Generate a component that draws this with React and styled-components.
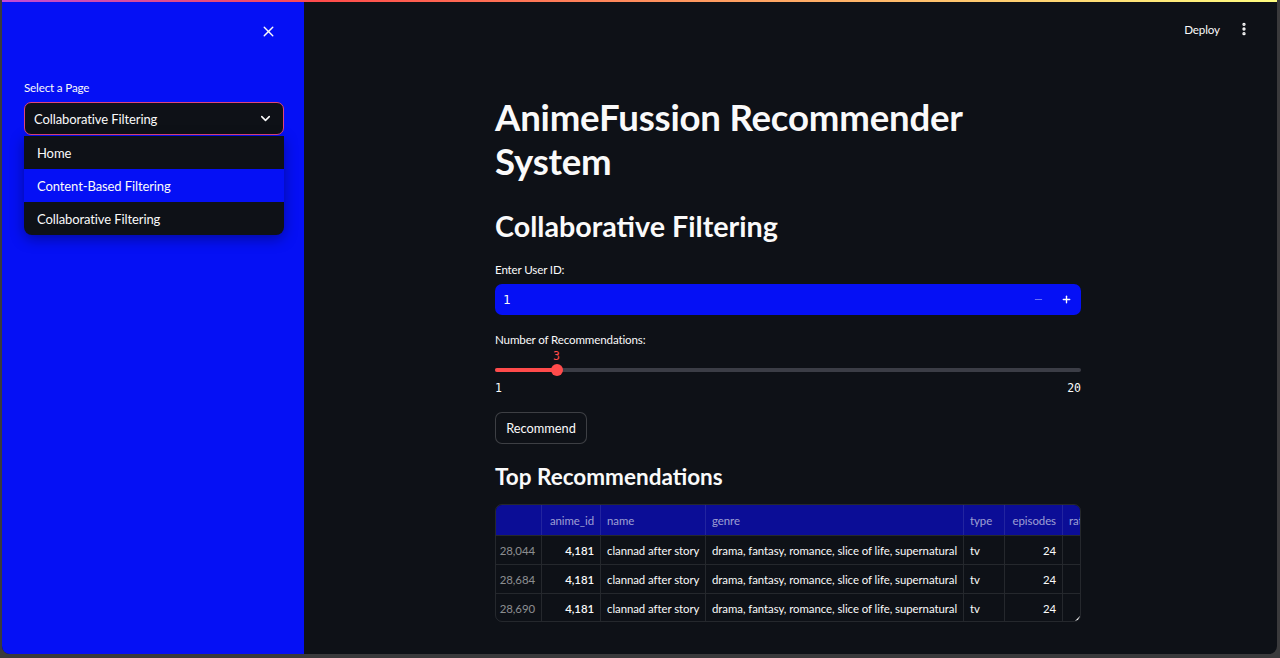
import React from 'react';
import styled, { createGlobalStyle } from 'styled-components';
import { X, ChevronDown, EllipsisVertical, Minus, Plus } from 'lucide-react';

const GlobalStyle = createGlobalStyle`
  html, body {
    margin: 0;
    padding: 0;
    background: #3a3a3c;
    font-family: Lato, "Noto Sans", sans-serif;
    color: #fafafa;
  }
`;

const Frame = styled.div`
  width: 1280px;
  height: 658px;
  padding: 0 3px 4px 2px;
  box-sizing: border-box;
  background: #3a3a3c;
`;

const Window = styled.div`
  position: relative;
  display: flex;
  height: 654px;
  border-radius: 0 0 8px 8px;
  overflow: hidden;
  background: #0e1117;
`;

const Decoration = styled.div`
  position: absolute;
  top: 0;
  left: 0;
  right: 0;
  height: 2px;
  background: linear-gradient(90deg, #c04bd8, #ff4b4b 25%, #ff9a60 55%, #fffd80);
  z-index: 5;
`;

const Sidebar = styled.aside`
  width: 302px;
  flex-shrink: 0;
  background: #0510f5;
  display: flex;
  flex-direction: column;
  padding: 0 20px 0 22px;
  box-sizing: border-box;
`;

const SidebarTop = styled.div`
  height: 62px;
  display: flex;
  justify-content: flex-end;
  align-items: center;
  padding-right: 7px;
  color: #fafafa;
`;

const IconButton = styled.button`
  background: none;
  border: none;
  padding: 0;
  color: #fafafa;
  display: flex;
  align-items: center;
  cursor: pointer;
`;

const Label = styled.div`
  font-size: 11.6px;
  letter-spacing: -0.15px;
  color: #fafafa;
  margin-top: ${p => p.$top || 0}px;
  margin-bottom: ${p => p.$bottom || 6}px;
  line-height: 16px;
`;

const SelectBox = styled.div`
  height: 33px;
  box-sizing: border-box;
  border: 1px solid #e0457a;
  border-radius: 7px;
  background: #0e1117;
  display: flex;
  align-items: center;
  justify-content: space-between;
  padding: 0 10px 0 9px;
  font-size: 13px;
  letter-spacing: -0.1px;
  color: #fafafa;
`;

const Menu = styled.ul`
  list-style: none;
  margin: 1px 0 0;
  padding: 0;
  background: #0e1117;
  border-radius: 0 0 8px 8px;
  overflow: hidden;
  box-shadow: 0 4px 14px rgba(0, 0, 0, 0.35);
`;

const MenuItem = styled.li`
  height: 33px;
  display: flex;
  align-items: center;
  padding-left: 13px;
  font-size: 13px;
  letter-spacing: -0.1px;
  color: #fafafa;
  background: ${p => (p.$active ? '#0510f5' : 'transparent')};
`;

const Main = styled.main`
  flex: 1;
  display: flex;
  flex-direction: column;
  position: relative;
`;

const Toolbar = styled.div`
  height: 58px;
  display: flex;
  justify-content: flex-end;
  align-items: center;
  gap: 16px;
  padding-right: 25px;
`;

const DeployLink = styled.span`
  font-size: 11.6px;
  letter-spacing: -0.1px;
  color: #fafafa;
`;

const Content = styled.div`
  width: 586px;
  margin-left: 191px;
  display: flex;
  flex-direction: column;
`;

const Title = styled.h1`
  margin: 37px 0 0;
  font-size: 36.6px;
  font-weight: 700;
  line-height: 44px;
  letter-spacing: -0.2px;
`;

const Subtitle = styled.h2`
  margin: 24px 0 0;
  font-size: 28.7px;
  font-weight: 700;
  line-height: 38px;
`;

const NumberInput = styled.div`
  height: 31px;
  border-radius: 7px;
  background: #0510f5;
  display: flex;
  align-items: center;
  padding: 0 8px;
  font-family: "DejaVu Sans Mono", monospace;
  font-size: 12.5px;
`;

const InputValue = styled.span`
  flex: 1;
`;

const Stepper = styled.div`
  display: flex;
  gap: 17px;
  align-items: center;
  padding-right: 1px;
`;

const SliderWrap = styled.div`
  display: flex;
  flex-direction: column;
`;

const ThumbValue = styled.div`
  height: 14px;
  font-family: "DejaVu Sans Mono", monospace;
  font-size: 11.5px;
  color: #ff4b4b;
  padding-left: 58px;
  line-height: 14px;
`;

const Track = styled.div`
  position: relative;
  height: 4px;
  margin-top: 5px;
  border-radius: 2px;
  background: #3b3d46;
`;

const TrackFill = styled.div`
  height: 100%;
  border-radius: 2px;
  background: #ff4b4b;
`;

const Thumb = styled.div`
  position: absolute;
  top: -4px;
  width: 12px;
  height: 12px;
  margin-left: -6px;
  border-radius: 50%;
  background: #ff4b4b;
`;

const Range = styled.div`
  display: flex;
  justify-content: space-between;
  margin-top: 9px;
  font-family: "DejaVu Sans Mono", monospace;
  font-size: 11.5px;
  line-height: 14px;
`;

const Button = styled.button`
  align-self: flex-start;
  margin-top: 17px;
  height: 32px;
  width: 92px;
  padding: 0;
  border-radius: 7px;
  border: 1px solid rgba(250, 250, 250, 0.2);
  background: #0e1117;
  color: #fafafa;
  font-family: inherit;
  font-size: 12.8px;
`;

const SectionTitle = styled.h3`
  margin: 19px 0 0;
  font-size: 22.5px;
  font-weight: 700;
  line-height: 28px;
`;

const TableWrap = styled.div`
  position: relative;
  margin-top: 13px;
  border: 1px solid rgba(250, 250, 250, 0.1);
  border-radius: 7px;
  overflow: hidden;
  height: 118px;
  box-sizing: border-box;
`;

const Grid = styled.div`
  display: grid;
  grid-template-columns: 46px 59px 105px 258px 41px 58px 60px;
  width: max-content;
  font-size: 11.4px;
  letter-spacing: -0.05px;
`;

const HeadCell = styled.div`
  height: 30px;
  background: #0b0d96;
  display: flex;
  align-items: center;
  justify-content: ${p => (p.$right ? 'flex-end' : 'flex-start')};
  padding: 0 6px;
  color: rgba(250, 250, 250, 0.62);
  border-right: 1px solid rgba(250, 250, 250, 0.1);
  white-space: nowrap;
  overflow: hidden;
`;

const Cell = styled.div`
  height: 29px;
  display: flex;
  align-items: center;
  justify-content: ${p => (p.$right ? 'flex-end' : 'flex-start')};
  padding: 0 6px;
  color: ${p => (p.$muted ? 'rgba(250, 250, 250, 0.55)' : '#fafafa')};
  font-weight: ${p => (p.$bold ? 600 : 400)};
  border-right: 1px solid rgba(250, 250, 250, 0.1);
  border-top: 1px solid rgba(250, 250, 250, 0.1);
  box-sizing: border-box;
  white-space: nowrap;
  overflow: hidden;
`;

const ResizeHandle = styled.div`
  position: absolute;
  right: 0;
  bottom: 0;
  width: 0;
  height: 0;
  border-left: 5px solid transparent;
  border-bottom: 5px solid #fafafa;
`;

const rows = [
  { idx: '28,044' },
  { idx: '28,684' },
  { idx: '28,690' },
];

export default function App() {
  return (
    <>
      <GlobalStyle />
      <Frame>
        <Window>
          <Decoration />
          <Sidebar>
            <SidebarTop>
              <IconButton>
                <X size={17} strokeWidth={2} />
              </IconButton>
            </SidebarTop>
            <Label $top={18} $bottom={6}>Select a Page</Label>
            <SelectBox>
              <span>Collaborative Filtering</span>
              <ChevronDown size={15} strokeWidth={2.5} />
            </SelectBox>
            <Menu>
              <MenuItem>Home</MenuItem>
              <MenuItem $active>Content-Based Filtering</MenuItem>
              <MenuItem>Collaborative Filtering</MenuItem>
            </Menu>
          </Sidebar>
          <Main>
            <Toolbar>
              <DeployLink>Deploy</DeployLink>
              <IconButton>
                <EllipsisVertical size={16} strokeWidth={3} />
              </IconButton>
            </Toolbar>
            <Content>
              <Title>
                AnimeFussion Recommender
                <br />
                System
              </Title>
              <Subtitle>Collaborative Filtering</Subtitle>
              <Label $top={17} $bottom={6}>Enter User ID:</Label>
              <NumberInput>
                <InputValue>1</InputValue>
                <Stepper>
                  <Minus size={11} strokeWidth={2} color="rgba(250,250,250,0.45)" />
                  <Plus size={11} strokeWidth={3} />
                </Stepper>
              </NumberInput>
              <Label $top={17} $bottom={1}>Number of Recommendations:</Label>
              <SliderWrap>
                <ThumbValue>3</ThumbValue>
                <Track>
                  <TrackFill style={{ width: `${(2 / 19) * 100}%` }} />
                  <Thumb style={{ left: `${(2 / 19) * 100}%` }} />
                </Track>
                <Range>
                  <span>1</span>
                  <span>20</span>
                </Range>
              </SliderWrap>
              <Button>Recommend</Button>
              <SectionTitle>Top Recommendations</SectionTitle>
              <TableWrap>
                <Grid>
                  <HeadCell />
                  <HeadCell $right>anime_id</HeadCell>
                  <HeadCell>name</HeadCell>
                  <HeadCell>genre</HeadCell>
                  <HeadCell>type</HeadCell>
                  <HeadCell $right>episodes</HeadCell>
                  <HeadCell>rating</HeadCell>
                  {rows.map(r => (
                    <React.Fragment key={r.idx}>
                      <Cell $muted $right>{r.idx}</Cell>
                      <Cell $bold $right>4,181</Cell>
                      <Cell>clannad after story</Cell>
                      <Cell>drama, fantasy, romance, slice of life, supernatural</Cell>
                      <Cell>tv</Cell>
                      <Cell $right>24</Cell>
                      <Cell $right>9.06</Cell>
                    </React.Fragment>
                  ))}
                </Grid>
                <ResizeHandle />
              </TableWrap>
            </Content>
          </Main>
        </Window>
      </Frame>
    </>
  );
}
